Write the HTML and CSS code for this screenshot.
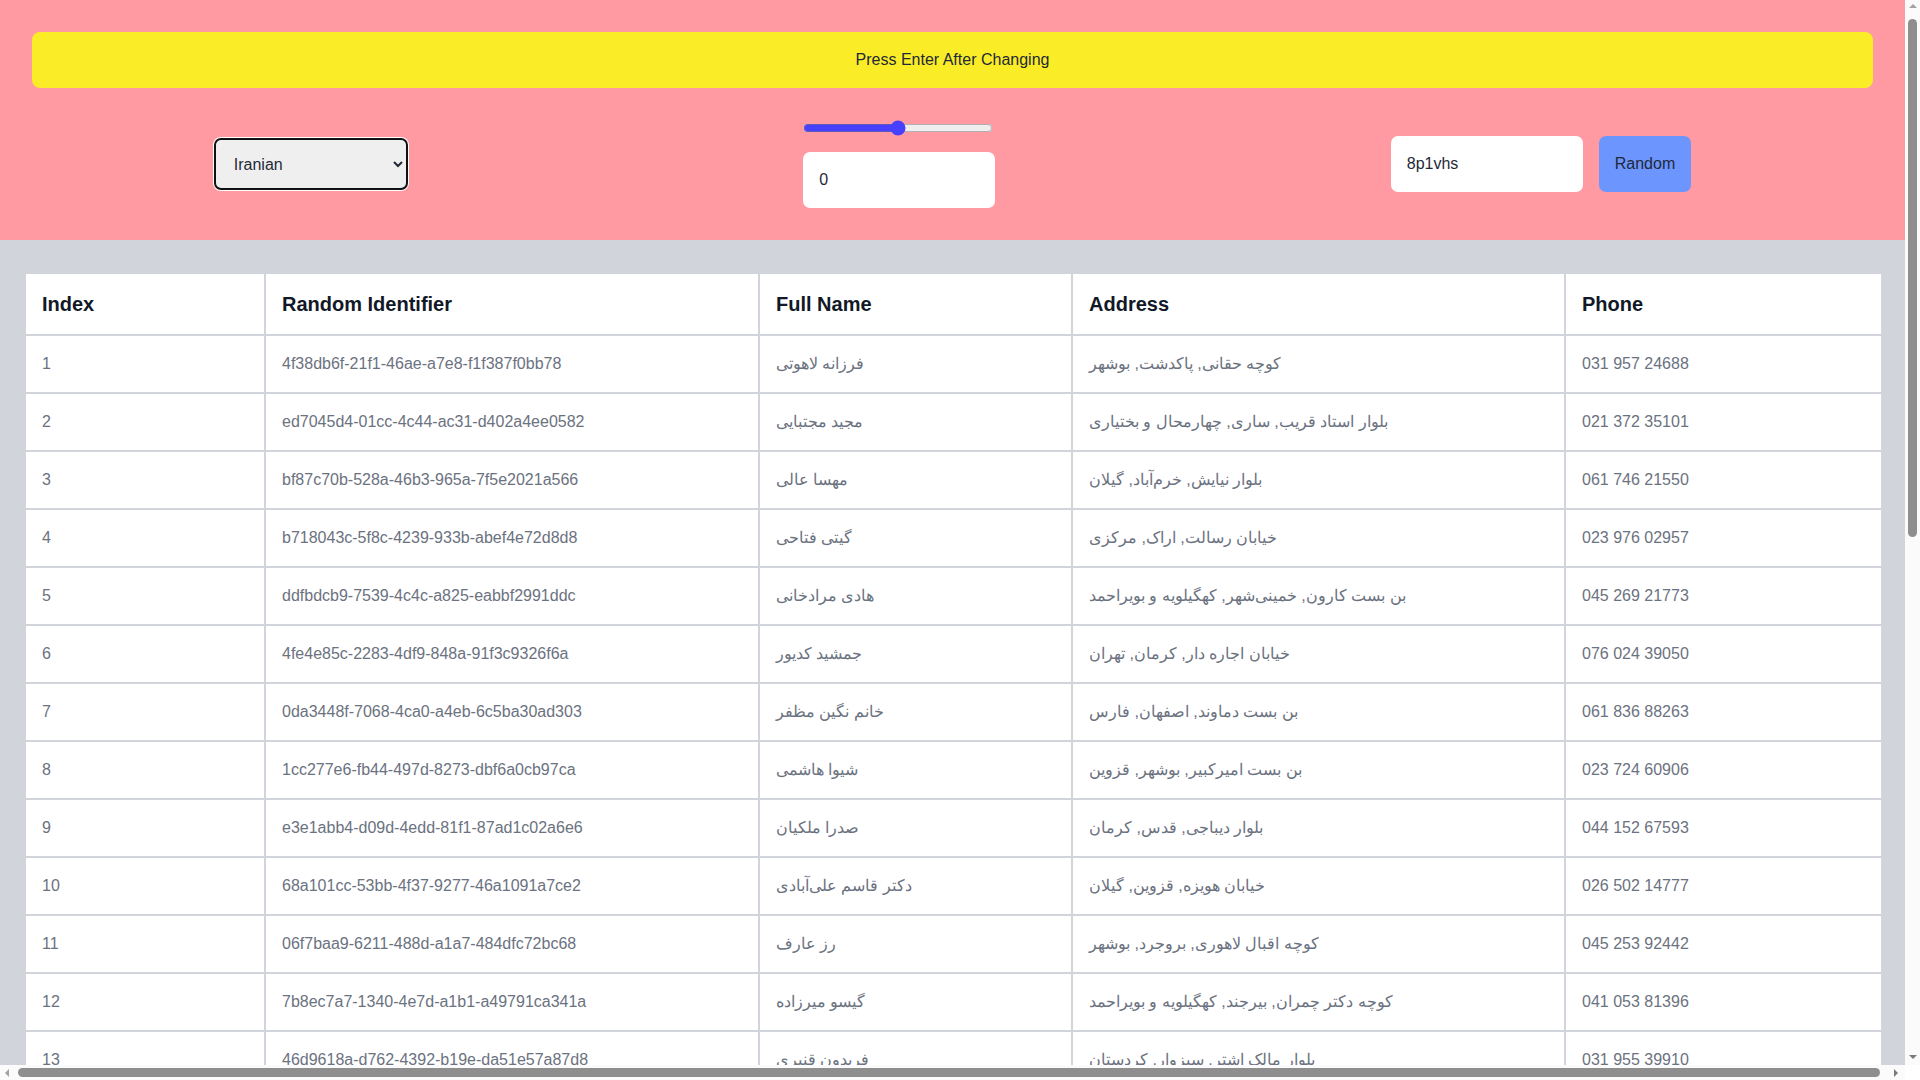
FILE: index.html
```html
<!DOCTYPE html>
<html lang="en">
<head>
<meta charset="utf-8">
<title>Fake Data Generator</title>
<link rel="stylesheet" href="styles.css">
</head>
<body>
<header class="top">
  <div class="notice">Press Enter After Changing</div>
  <div class="controls">
    <select class="region">
      <option>Iranian</option>
      <option>American</option>
      <option>German</option>
    </select>
    <div class="errors">
      <input class="slider" type="range" min="0" max="10" step="0.5" value="5">
      <input class="field" type="number" value="0">
    </div>
    <div class="seed">
      <input class="field" type="text" value="8p1vhs">
      <button class="btn" type="button">Random</button>
    </div>
  </div>
</header>
<main class="content">
  <table class="data">
    <colgroup>
      <col class="c-index"><col class="c-id"><col class="c-name"><col class="c-addr"><col class="c-phone">
    </colgroup>
    <thead>
      <tr><th>Index</th><th>Random Identifier</th><th>Full Name</th><th>Address</th><th>Phone</th></tr>
    </thead>
    <tbody>
      <tr><td>1</td><td>4f38db6f-21f1-46ae-a7e8-f1f387f0bb78</td><td>فرزانه لاهوتی</td><td>کوچه حقانی, پاکدشت, بوشهر</td><td>031 957 24688</td></tr>
      <tr><td>2</td><td>ed7045d4-01cc-4c44-ac31-d402a4ee0582</td><td>مجید مجتبایی</td><td>بلوار استاد قریب, ساری, چهارمحال و بختیاری</td><td>021 372 35101</td></tr>
      <tr><td>3</td><td>bf87c70b-528a-46b3-965a-7f5e2021a566</td><td>مهسا عالی</td><td>بلوار نیایش, خرم‌آباد, گیلان</td><td>061 746 21550</td></tr>
      <tr><td>4</td><td>b718043c-5f8c-4239-933b-abef4e72d8d8</td><td>گیتی فتاحی</td><td>خیابان رسالت, اراک, مرکزی</td><td>023 976 02957</td></tr>
      <tr><td>5</td><td>ddfbdcb9-7539-4c4c-a825-eabbf2991ddc</td><td>هادی مرادخانی</td><td>بن بست کارون, خمینی‌شهر, کهگیلویه و بویراحمد</td><td>045 269 21773</td></tr>
      <tr><td>6</td><td>4fe4e85c-2283-4df9-848a-91f3c9326f6a</td><td>جمشید کدیور</td><td>خیابان اجاره دار, کرمان, تهران</td><td>076 024 39050</td></tr>
      <tr><td>7</td><td>0da3448f-7068-4ca0-a4eb-6c5ba30ad303</td><td>خانم نگین مظفر</td><td>بن بست دماوند, اصفهان, فارس</td><td>061 836 88263</td></tr>
      <tr><td>8</td><td>1cc277e6-fb44-497d-8273-dbf6a0cb97ca</td><td>شیوا هاشمی</td><td>بن بست امیرکبیر, بوشهر, قزوین</td><td>023 724 60906</td></tr>
      <tr><td>9</td><td>e3e1abb4-d09d-4edd-81f1-87ad1c02a6e6</td><td>صدرا ملکیان</td><td>بلوار دیباجی, قدس, کرمان</td><td>044 152 67593</td></tr>
      <tr><td>10</td><td>68a101cc-53bb-4f37-9277-46a1091a7ce2</td><td>دکتر قاسم علی‌آبادی</td><td>خیابان هویزه, قزوین, گیلان</td><td>026 502 14777</td></tr>
      <tr><td>11</td><td>06f7baa9-6211-488d-a1a7-484dfc72bc68</td><td>رز عارف</td><td>کوچه اقبال لاهوری, بروجرد, بوشهر</td><td>045 253 92442</td></tr>
      <tr><td>12</td><td>7b8ec7a7-1340-4e7d-a1b1-a49791ca341a</td><td>گیسو میرزاده</td><td>کوچه دکتر چمران, بیرجند, کهگیلویه و بویراحمد</td><td>041 053 81396</td></tr>
      <tr><td>13</td><td>46d9618a-d762-4392-b19e-da51e57a87d8</td><td>فریدون قنبری</td><td>بلوار مالک اشتر, سبزوار, کردستان</td><td>031 955 39910</td></tr>
      <tr><td>14</td><td>9c2e5f1a-3b7d-4e08-a6c1-2f4d8b9e7a03</td><td>نرگس صالحی</td><td>خیابان ولیعصر, شیراز, فارس</td><td>021 448 17362</td></tr>
      <tr><td>15</td><td>a71d3c94-8e2f-4b56-9d0a-c5e1f7283b6d</td><td>محمدرضا کریمی</td><td>کوچه بهار, تبریز, آذربایجان شرقی</td><td>041 305 72814</td></tr>
      <tr><td>16</td><td>3e8f0b27-d4c9-45a1-b7e3-18a6f9c2d045</td><td>لیلا رستمی</td><td>بلوار کشاورز, یزد, یزد</td><td>035 612 40987</td></tr>
      <tr><td>17</td><td>f0b94a61-27ce-4d83-8f15-6a3c0e9b7d21</td><td>آرش نوروزی</td><td>بن بست لاله, کاشان, اصفهان</td><td>031 774 58320</td></tr>
      <tr><td>18</td><td>5d27c8e3-a9f0-4b1e-93c6-d8e41a0f6b59</td><td>دکتر سارا امینی</td><td>خیابان آزادی, رشت, گیلان</td><td>013 229 61045</td></tr>
      <tr><td>19</td><td>c4a6e0f8-1d93-4c72-a5b8-0e7f3d2b9c16</td><td>بهرام شریفی</td><td>کوچه نسترن, ارومیه, آذربایجان غربی</td><td>044 583 30271</td></tr>
      <tr><td>20</td><td>7e1f9d35-6b08-4a2c-8e4d-b3c5a7f10e92</td><td>مریم جعفری</td><td>بلوار معلم, زنجان, زنجان</td><td>024 917 46638</td></tr>
      <tr><td>21</td><td>2b6c4d81-f07e-49a3-b2d5-7c1e9f0a3864</td><td>کامران احمدی</td><td>خیابان فردوسی, مشهد, خراسان رضوی</td><td>051 362 08417</td></tr>
      <tr><td>22</td><td>e9a0137f-5c2b-4d68-a4f1-0b8d6e3c92a7</td><td>آقای بابک توکلی</td><td>بن بست نارون, قم, قم</td><td>025 140 93726</td></tr>
      <tr><td>23</td><td>6f4b2a08-93d1-4e7c-8b05-d2c7a1e6f349</td><td>زهرا موسوی</td><td>کوچه شقایق, همدان, همدان</td><td>081 675 21093</td></tr>
      <tr><td>24</td><td>d3c8e7a2-40f9-4b15-9a6e-5f2b0c8d1e74</td><td>پرویز قاسمی</td><td>بلوار امام رضا, سمنان, سمنان</td><td>023 308 56142</td></tr>
      <tr><td>25</td><td>18e5f9c0-b6a4-4237-8d1f-c9a3e2b70d56</td><td>ستاره رحیمی</td><td>خیابان انقلاب, اهواز, خوزستان</td><td>061 492 73580</td></tr>
      <tr><td>26</td><td>b2f7d4e1-6a3c-48b9-a0e2-73d9c5f184ab</td><td>حمید نظری</td><td>کوچه یاس, ساوه, مرکزی</td><td>086 217 64905</td></tr>
      <tr><td>27</td><td>4a9c1e6d-7b2f-4083-9e5a-e1f0b3d8c627</td><td>مهندس رضا یزدانی</td><td>بن بست مهر, بندرعباس, هرمزگان</td><td>076 853 02418</td></tr>
      <tr><td>28</td><td>c70e3b5f-9d14-4a6e-b8c2-2a6f4d9e01b3</td><td>فاطمه حسینی</td><td>بلوار جمهوری, کرمانشاه, کرمانشاه</td><td>083 561 37294</td></tr>
      <tr><td>29</td><td>5e2d8a4c-1f6b-47d9-83a0-f4c7b1e9d205</td><td>امید سلطانی</td><td>خیابان بهشتی, گرگان, گلستان</td><td>017 326 85017</td></tr>
      <tr><td>30</td><td>f8b1c6e9-2a5d-4c30-9f7b-6d0e3a8c4f12</td><td>سحر اکبری</td><td>کوچه گلستان, ایلام, ایلام</td><td>084 779 12653</td></tr>
    </tbody>
  </table>
</main>
<div class="vscroll" aria-hidden="true">
  <span class="arrow arrow-up"></span>
  <span class="vthumb"></span>
  <span class="arrow arrow-down"></span>
</div>
<div class="hscroll" aria-hidden="true">
  <span class="arrow arrow-left"></span>
  <span class="hthumb"></span>
  <span class="arrow arrow-right"></span>
</div>
<div class="scroll-corner" aria-hidden="true"></div>
</body>
</html>
```

FILE: styles.css
```css
html, body {
  margin: 0;
  padding: 0;
}

body {
  margin-right: 15px;
  font-family: "Liberation Sans", Arial, sans-serif;
  font-size: 16px;
  line-height: 24px;
  color: #1f2937;
  background: #d1d5db;
}

.top {
  background: #ff9aa2;
  padding: 32px;
  display: flex;
  flex-direction: column;
  gap: 30px;
}

.notice {
  background: #faed27;
  border-radius: 8px;
  height: 56px;
  display: flex;
  align-items: center;
  justify-content: center;
  color: #1f2937;
}

.controls {
  display: flex;
  align-items: center;
  justify-content: space-around;
  margin: 0 -16px;
}

.region {
  box-sizing: border-box;
  width: 194px;
  height: 52px;
  margin-top: 2px;
  padding: 0 4px 0 14px;
  font: inherit;
  color: #1f2937;
  background-color: #efefef;
  border: 2px solid #111111;
  border-radius: 7px;
  box-shadow: 0 0 0 1px #ffffff;
}

.errors {
  width: 192px;
  display: flex;
  flex-direction: column;
  gap: 14px;
}

.slider {
  margin: 2px 2px 2px 0;
  height: 16px;
  accent-color: #4840ff;
}

.field {
  box-sizing: border-box;
  width: 192px;
  height: 56px;
  padding: 0 16px;
  border: none;
  border-radius: 7px;
  background: #ffffff;
  font: inherit;
  color: #1f2937;
}

.seed {
  display: flex;
  align-items: center;
  gap: 16px;
  margin-top: 2px;
}

.btn {
  box-sizing: border-box;
  height: 56px;
  padding: 0 16px;
  border: none;
  border-radius: 7px;
  background: #6c96fe;
  font: inherit;
  color: #1f2937;
}

.content {
  padding: 32px 24px;
}

.data {
  width: 100%;
  table-layout: fixed;
  border-collapse: collapse;
  background: #ffffff;
}

.c-index { width: 240px; }
.c-id { width: 494px; }
.c-name { width: 313px; }
.c-addr { width: 493px; }
.c-phone { width: 317px; }

.data th,
.data td {
  border: 2px solid #d1d5db;
  padding: 16px;
  text-align: left;
  white-space: nowrap;
  overflow: hidden;
}

.data th {
  font-size: 20px;
  line-height: 28px;
  font-weight: bold;
  color: #111827;
}

.data td {
  color: #6b7280;
}

/* browser scrollbars drawn over the page */
.vscroll {
  position: fixed;
  top: 0;
  right: 0;
  width: 15px;
  height: calc(100vh - 15px);
  background: #fbfbfb;
  display: flex;
  flex-direction: column;
  align-items: center;
}

.hscroll {
  position: fixed;
  left: 0;
  bottom: 0;
  width: calc(100vw - 15px);
  height: 15px;
  background: #fbfbfb;
  display: flex;
  align-items: center;
}

.scroll-corner {
  position: fixed;
  right: 0;
  bottom: 0;
  width: 15px;
  height: 15px;
  background: #ffffff;
}

.arrow {
  width: 0;
  height: 0;
  flex: none;
}

.arrow-up {
  margin: 4px 0 6px;
  border-left: 4px solid transparent;
  border-right: 4px solid transparent;
  border-bottom: 4px solid #a3a3a3;
}

.arrow-down {
  margin: auto 0 6px;
  border-left: 4px solid transparent;
  border-right: 4px solid transparent;
  border-top: 4px solid #7a7a7a;
}

.arrow-left {
  margin: 0 6px 0 5px;
  border-top: 4px solid transparent;
  border-bottom: 4px solid transparent;
  border-right: 4px solid #a3a3a3;
}

.arrow-right {
  margin: 0 7px 0 auto;
  border-top: 4px solid transparent;
  border-bottom: 4px solid transparent;
  border-left: 4px solid #7a7a7a;
}

.vthumb {
  width: 9px;
  height: 518px;
  margin-top: 5px;
  border-radius: 5px;
  background: #8e8e8e;
}

.hthumb {
  width: 1862px;
  height: 9px;
  margin-left: 3px;
  border-radius: 5px;
  background: #8e8e8e;
}
```
